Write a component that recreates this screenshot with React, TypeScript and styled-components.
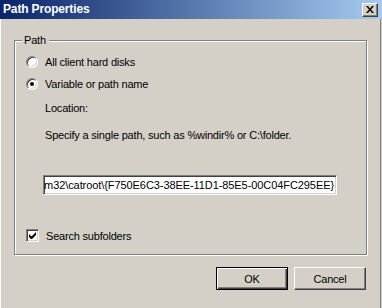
import styled, { createGlobalStyle } from "styled-components";

const GlobalStyle = createGlobalStyle`
  html, body {
    margin: 0;
    padding: 0;
    background: #d4d0c8;
  }
  body {
    font-family: "Liberation Sans", Arial, sans-serif;
    font-size: 11px;
    color: #000;
  }
`;

const Window = styled.div`
  width: 382px;
  height: 308px;
  display: flex;
  flex-direction: column;
  background: #d4d0c8;
  box-sizing: border-box;
  overflow: hidden;
`;

const TitleBar = styled.div`
  height: 19px;
  flex: 0 0 19px;
  display: flex;
  align-items: center;
  justify-content: space-between;
  padding: 0 4px 0 3px;
  background: linear-gradient(to right, #0a246a 0%, #a6caf0 100%);
`;

const Title = styled.span`
  color: #fff;
  font-weight: bold;
  font-size: 12px;
  letter-spacing: -0.15px;
  line-height: 19px;
`;

const CloseButton = styled.div`
  width: 16px;
  height: 14px;
  box-sizing: border-box;
  background: #d4d0c8;
  border-top: 1px solid #fff;
  border-left: 1px solid #fff;
  border-right: 1px solid #404040;
  border-bottom: 1px solid #404040;
  box-shadow: inset -1px -1px 0 #808080;
  display: flex;
  align-items: center;
  justify-content: center;
`;

const Body = styled.div`
  flex: 1;
  display: flex;
  flex-direction: column;
  padding: 21px 14px 0 14px;
  border-left: 1px solid #fff;
  border-right: 1px solid #808080;
  margin-right: 1px;
  box-sizing: border-box;
`;

const Group = styled.div`
  position: relative;
  margin-left: -1px;
  width: 353px;
  height: 215px;
  box-sizing: border-box;
  border: 1px solid #808080;
  box-shadow: inset 1px 1px 0 #fff, 1px 1px 0 #fff;
  display: flex;
  flex-direction: column;
  padding: 0 0 0 11px;
`;

const Legend = styled.span`
  position: absolute;
  left: 7px;
  top: -8px;
  padding: 0 3px 0 2px;
  background: #d4d0c8;
  line-height: 14px;
  letter-spacing: -0.2px;
`;

const OptionRow = styled.label<{ $top: number }>`
  display: flex;
  align-items: center;
  height: 13px;
  margin-top: ${(p) => p.$top}px;
  gap: 7px;
  letter-spacing: -0.2px;
`;

const Radio = styled.span<{ $checked?: boolean }>`
  width: 12px;
  height: 12px;
  box-sizing: border-box;
  border-radius: 50%;
  background: #fff;
  border: 1px solid;
  border-color: #808080 #fff #fff #808080;
  box-shadow: inset 1px 1px 0 #404040, inset -1px -1px 0 #d4d0c8;
  display: flex;
  align-items: center;
  justify-content: center;
  &::after {
    content: "";
    display: ${(p) => (p.$checked ? "block" : "none")};
    width: 4px;
    height: 4px;
    border-radius: 50%;
    background: #000;
  }
`;

const Checkbox = styled.span`
  width: 13px;
  height: 13px;
  box-sizing: border-box;
  background: #fff;
  border: 1px solid;
  border-color: #808080 #fff #fff #808080;
  box-shadow: inset 1px 1px 0 #404040, inset -1px -1px 0 #d4d0c8;
  display: flex;
  align-items: center;
  justify-content: center;
`;

const Text = styled.div<{ $top: number }>`
  margin-top: ${(p) => p.$top}px;
  margin-left: 19px;
  height: 13px;
  line-height: 13px;
  letter-spacing: -0.2px;
  white-space: nowrap;
`;

const PathField = styled.div`
  margin-top: 33px;
  margin-left: 17px;
  width: 294px;
  height: 20px;
  box-sizing: border-box;
  background: #fff;
  border: 1px solid;
  border-color: #808080 #fff #fff #808080;
  box-shadow: inset 1px 1px 0 #404040, inset -1px -1px 0 #d4d0c8;
  padding: 0 2px;
  display: flex;
  align-items: center;
  justify-content: flex-end;
  overflow: hidden;
  white-space: nowrap;
  letter-spacing: -0.08px;
`;

const ButtonRow = styled.div`
  display: flex;
  justify-content: flex-end;
  gap: 6px;
  margin-top: 12px;
`;

const Button = styled.div<{ $default?: boolean }>`
  width: 72px;
  height: 23px;
  box-sizing: border-box;
  display: flex;
  align-items: center;
  justify-content: center;
  background: #d4d0c8;
  border: 1px solid;
  border-color: ${(p) => (p.$default ? "#000" : "#fff #404040 #404040 #fff")};
  box-shadow: ${(p) =>
    p.$default
      ? "inset 1px 1px 0 #fff, inset -1px -1px 0 #404040, inset -2px -2px 0 #808080"
      : "inset -1px -1px 0 #808080"};
  letter-spacing: -0.2px;
`;

export default function App() {
  return (
    <>
      <GlobalStyle />
      <Window>
        <TitleBar>
          <Title>Path Properties</Title>
          <CloseButton>
            <svg width="8" height="7" viewBox="0 0 8 7">
              <path
                d="M0 0h2l2 2.5L6 0h2L5 3.5 8 7H6L4 4.5 2 7H0l3-3.5z"
                fill="#000"
              />
            </svg>
          </CloseButton>
        </TitleBar>
        <Body>
          <Group>
            <Legend>Path</Legend>
            <OptionRow $top={14}>
              <Radio />
              All client hard disks
            </OptionRow>
            <OptionRow $top={9}>
              <Radio $checked />
              Variable or path name
            </OptionRow>
            <Text $top={12}>Location:</Text>
            <Text $top={14}>
              Specify a single path, such as %windir% or C:\folder.
            </Text>
            <PathField>
              %windir%\system32\catroot\{"{"}F750E6C3-38EE-11D1-85E5-00C04FC295EE{"}"}
            </PathField>
            <OptionRow $top={34}>
              <Checkbox>
                <svg width="7" height="7" viewBox="0 0 7 7">
                  <path d="M0 2v3l2 2h1l4-4V0L2.5 4.5z" fill="#000" />
                </svg>
              </Checkbox>
              Search subfolders
            </OptionRow>
          </Group>
          <ButtonRow>
            <Button $default>OK</Button>
            <Button>Cancel</Button>
          </ButtonRow>
        </Body>
      </Window>
    </>
  );
}
